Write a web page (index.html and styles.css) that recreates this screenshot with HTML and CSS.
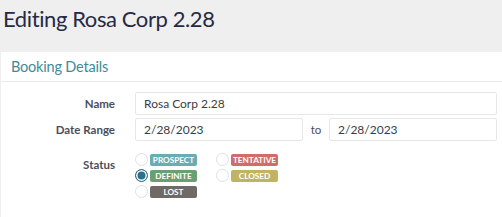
FILE: index.html
```html
<!DOCTYPE html>
<html>
<head>
<meta charset="utf-8">
<link rel="stylesheet" href="styles.css">
</head>
<body>
<header class="page-head">
  <h1 class="title">Editing Rosa Corp 2.28</h1>
</header>
<section class="panel">
  <div class="panel-head">Booking Details</div>
  <div class="panel-body">
    <div class="row">
      <label class="lbl">Name</label>
      <div class="field"><div class="input full">Rosa Corp 2.28</div></div>
    </div>
    <div class="row">
      <label class="lbl">Date Range</label>
      <div class="field range">
        <div class="input half">2/28/2023</div>
        <span class="to">to</span>
        <div class="input half">2/28/2023</div>
      </div>
    </div>
    <div class="row status-row">
      <label class="lbl">Status</label>
      <div class="status-grid">
        <div class="opt"><span class="radio"></span><span class="badge prospect">PROSPECT</span></div>
        <div class="opt"><span class="radio"></span><span class="badge tentative">TENTATIVE</span></div>
        <div class="opt"><span class="radio checked"></span><span class="badge definite">DEFINITE</span></div>
        <div class="opt"><span class="radio"></span><span class="badge closed">CLOSED</span></div>
        <div class="opt"><span class="radio"></span><span class="badge lost">LOST</span></div>
      </div>
    </div>
  </div>
</section>
</body>
</html>
```
FILE: styles.css
```css
html, body {
  margin: 0;
  padding: 0;
  background: #efefef;
  font-family: Lato, "Open Sans", sans-serif;
  overflow: hidden;
}
.page-head {
  height: 52px;
  padding-left: 3px;
  box-sizing: border-box;
}
.title {
  margin: 0;
  padding-top: 5px;
  font-size: 22px;
  font-weight: 400;
  color: #262a42;
  letter-spacing: -0.4px;
}
.panel {
  margin-left: 1px;
  background: #fff;
  height: 165px;
}
.panel-head {
  height: 30px;
  box-sizing: border-box;
  border-bottom: 1px solid #ebebeb;
  padding: 6px 0 0 10px;
  font-size: 14.5px;
  letter-spacing: -0.2px;
  color: #3e8b98;
}
.panel-body {
  padding: 10px 5px 0 0;
}
.row {
  display: flex;
  align-items: center;
  margin-bottom: 3px;
}
.lbl {
  width: 114px;
  text-align: right;
  font-size: 11.5px;
  font-weight: 700;
  color: #4b4d5a;
  margin-right: 20px;
  flex: none;
}
.field {
  flex: 1;
  display: flex;
  align-items: center;
}
.input {
  height: 23px;
  box-sizing: border-box;
  border: 1px solid #e7e7e7;
  border-radius: 2px;
  padding-left: 8px;
  font-size: 12px;
  color: #3a3c48;
  display: flex;
  align-items: center;
}
.input.full { flex: 1; }
.input.half { flex: 1; }
.to {
  width: 26px;
  text-align: center;
  font-size: 11.5px;
  color: #4b4d5a;
}
.status-row {
  align-items: flex-start;
  margin-top: 11px;
}
.status-row .lbl {
  padding-top: 6px;
}
.status-grid {
  display: grid;
  grid-template-columns: 81px 81px;
  row-gap: 3px;
  padding-top: 1px;
}
.opt {
  display: flex;
  align-items: center;
}
.radio {
  width: 11px;
  height: 11px;
  border: 1px solid #e0e0e0;
  border-radius: 50%;
  margin-right: 2px;
  box-sizing: content-box;
  background: #fff;
  display: inline-block;
}
.radio.checked {
  border-color: #2f7088;
  background: #2f7088;
  box-shadow: inset 0 0 0 1.5px #fff;
}
.badge {
  width: 47px;
  height: 12px;
  border-radius: 2px;
  color: #fff;
  font-size: 8.2px;
  font-weight: 700;
  display: flex;
  align-items: center;
  justify-content: center;
  letter-spacing: 0;
}
.prospect { background: #6aabb4; }
.definite { background: #6c9e73; }
.lost { background: #6f6a65; }
.tentative { background: #cf6d6d; }
.closed { background: #c0b462; }
```
